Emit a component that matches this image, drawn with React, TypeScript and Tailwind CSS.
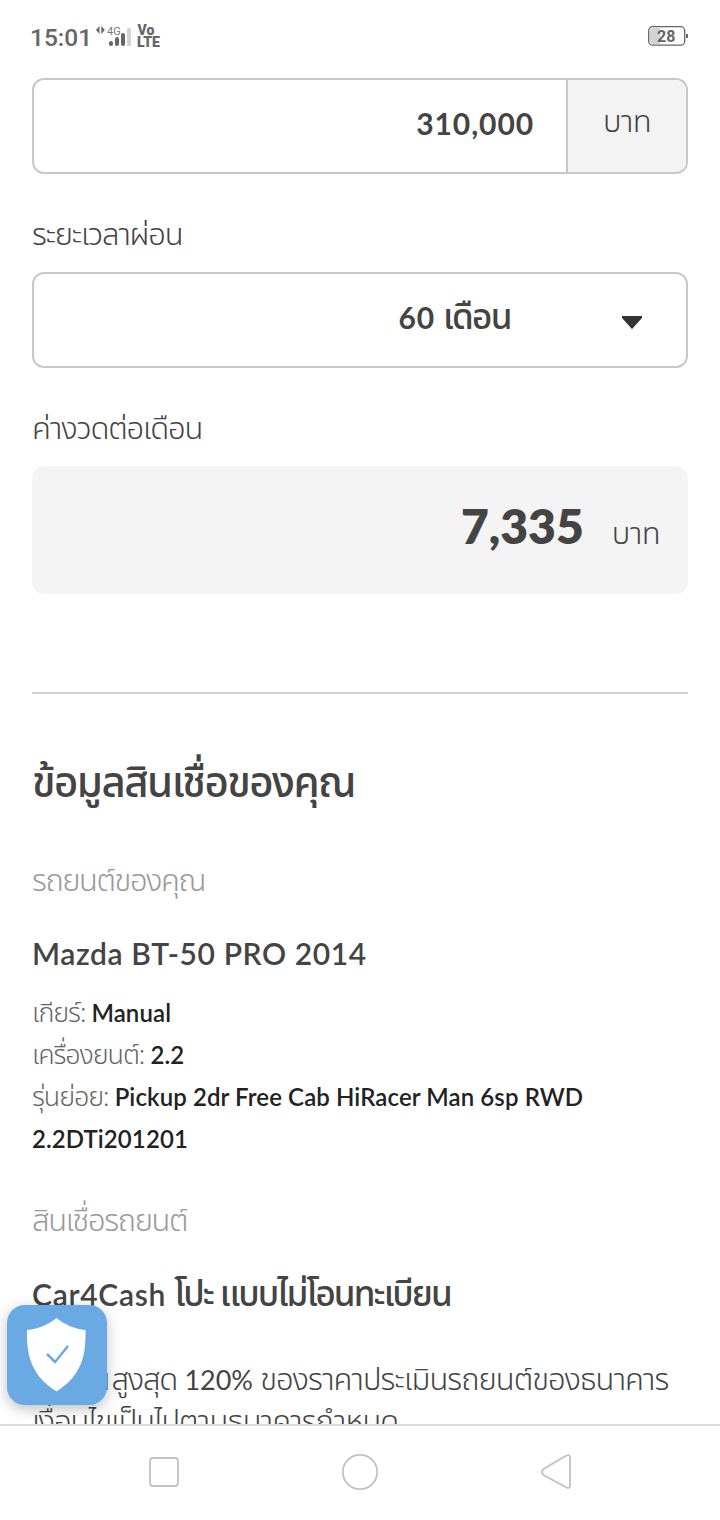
import React from 'react';

interface Detail {
  label: string;
  value: string;
}

const details: Detail[] = [
  { label: 'เกียร์:', value: 'Manual' },
  { label: 'เครื่องยนต์:', value: '2.2' },
  { label: 'รุ่นย่อย:', value: 'Pickup 2dr Free Cab HiRacer Man 6sp RWD 2.2DTi201201' },
];

const StatusBar: React.FC = () => {
  return (
    <header className="flex h-[78px] shrink-0 items-start justify-between pl-[30px] pr-8 text-[#666666]">
      <div className="flex items-start">
        <span className="mt-[22px] w-[61px] whitespace-nowrap font-[Roboto] text-[24.5px] font-medium leading-[32px]">15:01</span>
        <svg className="mt-[20px] ml-[4px]" width="68" height="30" viewBox="0 0 68 30">
          <path d="M1 10 L4.500 6 V14 Z M9.800 10 L6.300 6 V14 Z" fill="#666666" />
          <text x="12" y="15" fontFamily="Roboto" fontSize="11" fill="#777777">4G</text>
          <rect x="14" y="21" width="4" height="5" rx="2" fill="#666666" />
          <rect x="20" y="17" width="4" height="9" rx="2" fill="#666666" />
          <rect x="26" y="13" width="4" height="13" rx="2" fill="#666666" />
          <rect x="32" y="8" width="4" height="18" rx="1.500" fill="#d3d3d3" />
          <text x="42.500" y="14.500" fontFamily="Roboto" fontSize="14" fontWeight="900" fill="#666666">Vo</text>
          <text x="42" y="27" fontFamily="Roboto" fontSize="15" fontWeight="900" textLength="23" lengthAdjust="spacingAndGlyphs" fill="#666666">LTE</text>
        </svg>
      </div>
      <svg className="mt-[25px]" width="40" height="22" viewBox="0 0 40 22">
        <rect x="0.700" y="1.700" width="36" height="18.500" rx="4" fill="#ffffff" stroke="#666666" strokeWidth="1.300" />
        <path d="M5 3 H12 V19 H5 Q2 19 2 16 V6 Q2 3 5 3 Z" fill="#d3d3d3" />
        <rect x="38" y="9" width="2" height="4" fill="#666666" />
        <text x="9" y="17" fontFamily="Roboto" fontSize="16" fontWeight="700" fill="#666666">28</text>
      </svg>
    </header>
  );
};

const ShieldBadge: React.FC = () => {
  return (
    <div className="absolute left-[7px] top-[1305px] flex h-[100px] w-[100px] items-center justify-center rounded-[18px] bg-[#6aaae4] shadow-[0_4px_14px_rgba(0,0,0,0.25)]">
      <svg width="100" height="100" viewBox="0 0 100 100">
        <path d="M49.500 13 C58 20 68 24 78.500 25 C79 48 76 70 49.500 86.500 C23 70 19.500 48 20 25 C31 24 41 20 49.500 13 Z" fill="#ffffff" />
        <path d="M40 49 L48 57 L61 41" fill="none" stroke="#6aaae4" strokeWidth="2.500" />
      </svg>
    </div>
  );
};

const NavigationBar: React.FC = () => {
  return (
    <nav className="h-24 shrink-0 border-t-2 border-[#dddddd] bg-white">
      <svg width="720" height="92" viewBox="0 0 720 92" fill="none" stroke="#c2c2c2" strokeWidth="1.800">
        <rect x="150" y="32" width="28" height="28" rx="3" />
        <circle cx="360" cy="46" r="17.200" />
        <path d="M566.500 29.500 L543.500 43 Q540 46 543.500 49 L566.500 61.500 Q570 63 570 59.500 V31.500 Q570 28 566.500 29.500 Z" />
      </svg>
    </nav>
  );
};

const App: React.FC = () => {
  return (
    <div className="relative flex h-[1520px] w-[720px] flex-col overflow-hidden bg-white font-[Lato,'Noto_Sans_Thai',sans-serif] text-[#444444]">
      <StatusBar />
      <main className="min-h-0 flex-1 overflow-hidden px-8">
        <div className="flex h-24 rounded-xl border-2 border-[#c8c8c8]">
          <div className="flex-1 pr-8 pt-[23px] text-right text-[30px] font-bold leading-[40px] tracking-[0.9px]">310,000</div>
          <div className="w-[120px] rounded-r-[10px] border-l-2 border-[#c8c8c8] bg-[#f3f3f3] pt-[20px] text-center text-[31px] font-light leading-[40px] tracking-[-0.6px]">บาท</div>
        </div>

        <p className="mt-[39px] h-[40px] whitespace-nowrap text-[31px] font-light leading-[40px] tracking-[-1.25px]">ระยะเวลาผ่อน</p>
        <div className="mt-[19px] flex h-24 justify-end rounded-xl border-2 border-[#c8c8c8] pr-[43px]">
          <span className="pt-[21px] text-[30px] font-bold leading-[40px] tracking-[0.8px]">
            60 <span className="text-[35px] font-medium tracking-[-1.6px]">เดือน</span>
          </span>
          <svg className="ml-[110px] mt-[42px]" width="22" height="14" viewBox="0 0 22 14">
            <path d="M1 0 H21 V2 L11 13 L1 2 Z" fill="#333333" />
          </svg>
        </div>

        <p className="mt-[39px] h-[40px] whitespace-nowrap text-[31px] font-light leading-[40px] tracking-[-1.15px]">ค่างวดต่อเดือน</p>
        <div className="mt-[19px] flex h-32 items-baseline justify-end rounded-xl bg-[#f4f4f4] pr-7 pt-[28px]">
          <span className="text-[48px] font-extrabold leading-[64px]">7,335</span>
          <span className="ml-7 text-[31px] font-light leading-[40px] tracking-[-0.6px]">บาท</span>
        </div>

        <hr className="mt-[98px] border-t-2 border-[#d4d4d4]" />

        <h1 className="mt-[57px] h-[60px] whitespace-nowrap text-[42px] font-medium leading-[60px] tracking-[-1.55px]">ข้อมูลสินเชื่อของคุณ</h1>
        <p className="mt-[48px] h-[40px] whitespace-nowrap text-[31px] font-light leading-[40px] tracking-[-1.45px] text-[#999999]">รถยนต์ของคุณ</p>
        <h2 className="mt-[34px] h-[40px] whitespace-nowrap text-[30px] font-semibold leading-[40px] tracking-[0.6px]">Mazda BT-50 PRO 2014</h2>

        <ul className="mt-[19px] w-[600px] text-[24px] leading-[42px]">
          {details.map(detail => (
            <li key={detail.label}>
              <span className="text-[27px] font-light leading-[36px] tracking-[-1.1px] text-[#666666]">{detail.label}</span>{' '}
              <span className="font-semibold tracking-[0.1px] text-[#222222]">{detail.value}</span>
            </li>
          ))}
        </ul>

        <p className="mt-[39px] h-[40px] whitespace-nowrap text-[31px] font-light leading-[40px] tracking-[-1.35px] text-[#999999]">สินเชื่อรถยนต์</p>
        <h2 className="mt-[33px] h-[40px] whitespace-nowrap text-[30px] font-semibold leading-[40px] tracking-[0.7px]">
          Car4Cash <span className="text-[35px] font-medium tracking-[-1.9px]">โปะ แบบไม่โอนทะเบียน</span>
        </h2>
        <p className="mt-[45px] whitespace-nowrap text-[31px] font-light leading-[42px] tracking-[-1px]">
          <span className="tracking-[1px]">วงเงิน</span>
          <span className="tracking-[-1.2px]">สูงสุด</span>{' '}
          <span className="text-[27px] font-normal leading-[36px] tracking-[-0.1px]">120%</span>{' '}
          ของราคาประเมินรถยนต์ของธนาคาร
          <br />
          เงื่อนไขเป็นไปตามธนาคารกำหนด
        </p>
      </main>
      <NavigationBar />
      <ShieldBadge />
    </div>
  );
};

export default App;
